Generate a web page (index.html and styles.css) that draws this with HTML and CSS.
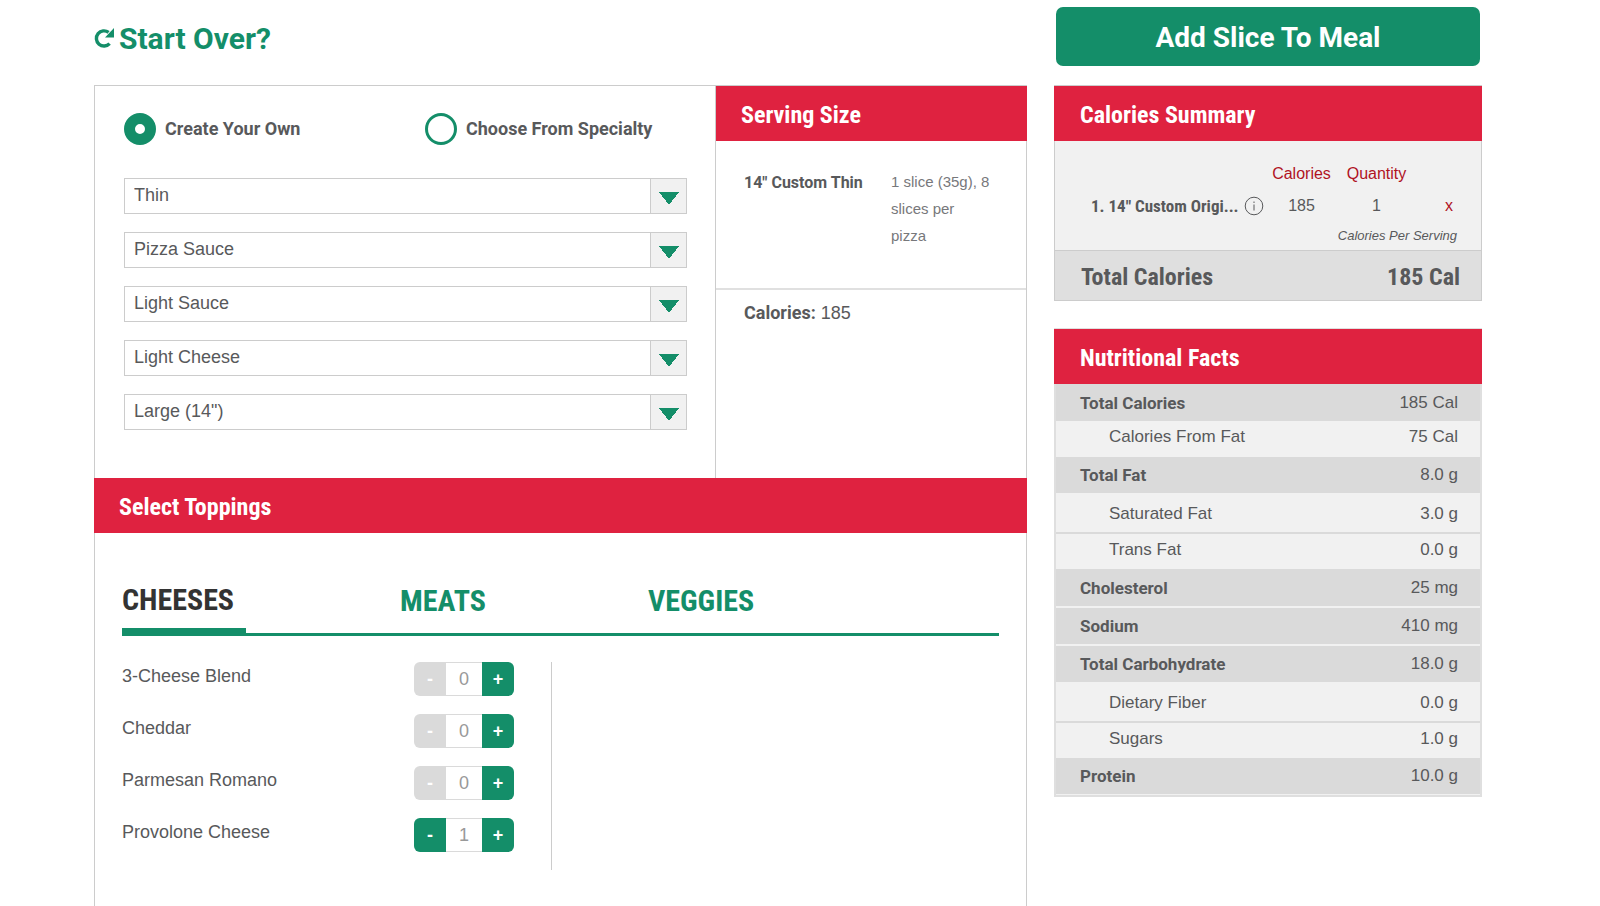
FILE: index.html
```
<!DOCTYPE html>
<html lang="en">
  <head>
    <meta charset="UTF-8" />
    <meta name="viewport" content="width=device-width, initial-scale=1.0" />
    <title>Nutrition Calculator</title>
    <link rel="stylesheet" href="styles.css">
  </head>
  <body>
    <div class="page">
      <main class="main">
        <div class="top">
          <button type="button" class="start-over">
            <svg width="20" height="20" viewBox="0 0 20 20" aria-hidden="true">
              <path d="M15.6 15.6A7.6 7.6 0 1 1 14.6 4.4" fill="none" stroke="#148e69" stroke-width="3.4" />
              <path d="M20 0v9.6h-9z" fill="#148e69" />
            </svg>
            Start Over?
          </button>
        </div>
        <div class="panel">
          <div class="panel-top">
            <form class="builder">
              <div class="modes">
                <label><input type="radio" name="mode" checked />Create Your Own</label>
                <label><input type="radio" name="mode" />Choose From Specialty</label>
              </div>
              <select aria-label="Crust"><option>Thin</option></select>
              <select aria-label="Sauce"><option>Pizza Sauce</option></select>
              <select aria-label="Sauce amount"><option>Light Sauce</option></select>
              <select aria-label="Cheese amount"><option>Light Cheese</option></select>
              <select aria-label="Size"><option>Large (14")</option></select>
            </form>
            <section class="serving">
              <h2 class="bar">Serving Size</h2>
              <div class="serving-item">
                <strong>14″ Custom Thin</strong>
                <p>1 slice (35g), 8 slices per pizza</p>
              </div>
              <p class="serving-cal"><strong>Calories:</strong> 185</p>
            </section>
          </div>
          <h2 class="bar">Select Toppings</h2>
          <section class="toppings">
            <div class="tabs">
              <button type="button" class="tab active">CHEESES</button>
              <button type="button" class="tab">MEATS</button>
              <button type="button" class="tab">VEGGIES</button>
            </div>
            <div class="topping-list">
              <div class="topping">
                <label for="t1">3-Cheese Blend</label>
                <div class="stepper">
                  <button type="button" disabled>-</button><input id="t1" type="text" value="0" /><button type="button">+</button>
                </div>
              </div>
              <div class="topping">
                <label for="t2">Cheddar</label>
                <div class="stepper">
                  <button type="button" disabled>-</button><input id="t2" type="text" value="0" /><button type="button">+</button>
                </div>
              </div>
              <div class="topping">
                <label for="t3">Parmesan Romano</label>
                <div class="stepper">
                  <button type="button" disabled>-</button><input id="t3" type="text" value="0" /><button type="button">+</button>
                </div>
              </div>
              <div class="topping">
                <label for="t4">Provolone Cheese</label>
                <div class="stepper">
                  <button type="button">-</button><input id="t4" type="text" value="1" /><button type="button">+</button>
                </div>
              </div>
            </div>
          </section>
        </div>
      </main>

      <aside class="side">
        <div class="top">
          <button type="button" class="add">Add Slice To Meal</button>
        </div>
        <section class="summary">
          <h2 class="bar">Calories Summary</h2>
          <table class="meal">
            <thead>
              <tr>
                <th class="name"></th>
                <th class="info"></th>
                <th class="num">Calories</th>
                <th class="num">Quantity</th>
                <th></th>
              </tr>
            </thead>
            <tbody>
              <tr>
                <td class="name">1. 14″ Custom Origi...</td>
                <td class="info">
                  <svg width="20" height="20" viewBox="0 0 20 20" fill="none" stroke="#58595b" role="img" aria-label="Info">
                    <circle cx="10" cy="10" r="8.8" />
                    <path d="M10 8.5v6M10 5.5v1.5" />
                  </svg>
                </td>
                <td class="num">185</td>
                <td class="num">1</td>
                <td class="del"><button type="button" aria-label="Remove">x</button></td>
              </tr>
            </tbody>
          </table>
          <p class="per">Calories Per Serving</p>
          <div class="total"><span>Total Calories</span><span>185 Cal</span></div>
        </section>

        <section class="facts">
          <h2 class="bar">Nutritional Facts</h2>
          <table>
            <tr class="head first"><th>Total Calories</th><td>185 Cal</td></tr>
            <tr><th>Calories From Fat</th><td>75 Cal</td></tr>
            <tr class="head"><th>Total Fat</th><td>8.0 g</td></tr>
            <tr class="line"><th>Saturated Fat</th><td>3.0 g</td></tr>
            <tr><th>Trans Fat</th><td>0.0 g</td></tr>
            <tr class="head gap"><th>Cholesterol</th><td>25 mg</td></tr>
            <tr class="head gap"><th>Sodium</th><td>410 mg</td></tr>
            <tr class="head first"><th>Total Carbohydrate</th><td>18.0 g</td></tr>
            <tr class="line"><th>Dietary Fiber</th><td>0.0 g</td></tr>
            <tr><th>Sugars</th><td>1.0 g</td></tr>
            <tr class="head"><th>Protein</th><td>10.0 g</td></tr>
          </table>
        </section>
      </aside>
    </div>
    <script>
      document.querySelectorAll(".stepper").forEach((el) => {
        const [minus, plus] = el.querySelectorAll("button");
        const input = el.querySelector("input");
        const step = (n) => {
          const value = Math.max(0, (parseInt(input.value) || 0) + n);
          input.value = value;
          minus.disabled = value === 0;
        };
        minus.onclick = () => step(-1);
        plus.onclick = () => step(1);
      });

      const tabs = document.querySelectorAll(".tab");
      tabs.forEach((tab) => {
        tab.onclick = () => {
          tabs.forEach((t) => t.classList.toggle("active", t === tab));
        };
      });
    </script>
  </body>
</html>
```
FILE: styles.css
```
* {
  margin: 0;
  padding: 0;
  box-sizing: border-box;
}
body {
  font-family: "Liberation Sans", Arial, sans-serif;
  font-size: 18px;
  color: #58595b;
  background: #fff;
}
button,
input,
select {
  font: inherit;
  color: inherit;
  border: 0;
  background: none;
}
button {
  cursor: pointer;
}
table {
  width: 100%;
  border-collapse: collapse;
}
.bar,
.tab,
.meal td.name,
.total {
  font-family: "Roboto Condensed", Roboto, sans-serif;
  font-weight: bold;
}
strong,
.start-over,
.add,
.modes,
.facts .head th {
  font-family: Roboto, sans-serif;
  font-weight: bold;
}
.page {
  display: grid;
  grid-template-columns: 933fr 428fr;
  column-gap: 27px;
  min-height: 100vh;
  padding: 0 118px 0 94px;
}
.main {
  display: flex;
  flex-direction: column;
}
.top {
  height: 85px;
  padding-top: 7px;
}
.bar {
  height: 55px;
  padding-left: 25px;
  line-height: 58px;
  font-size: 24px;
  color: #fff;
  background: #df2240;
}
.start-over {
  display: flex;
  align-items: center;
  gap: 5px;
  height: 62px;
  font-size: 30px;
  color: #148e69;
}
.add {
  display: block;
  width: calc(100% - 4px);
  height: 59px;
  margin: 0 auto;
  padding-top: 2px;
  border-radius: 7px;
  font-size: 28px;
  color: #fff;
  background: #148e69;
}

/* builder */
.panel {
  flex: 1;
  border: 1px solid #ccc;
  border-bottom: 0;
}
.panel > .bar {
  margin: 0 -1px;
}
.panel-top {
  display: grid;
  grid-template-columns: 620fr 311fr;
  min-height: 392px;
}
.builder {
  display: flex;
  flex-direction: column;
  gap: 18px;
  padding: 27px 28px 0 29px;
}
.modes {
  display: grid;
  grid-template-columns: 301px 1fr;
  height: 47px;
  font-size: 18px;
}
.modes label {
  display: flex;
  gap: 9px;
  height: 32px;
  line-height: 32px;
}
.modes input {
  appearance: none;
  width: 32px;
  height: 32px;
  border: 3px solid #148e69;
  border-radius: 50%;
}
.modes input:checked {
  border-width: 11px;
}
.builder select {
  appearance: none;
  height: 36px;
  padding: 0 46px 3px 9px;
  border: 1px solid #ccc;
  background:
    linear-gradient(to top right, transparent 50%, #148e69 50%) right 17px top 13px / 10px 13px no-repeat,
    linear-gradient(to top left, transparent 50%, #148e69 50%) right 7px top 13px / 10px 13px no-repeat,
    linear-gradient(90deg, #ccc 1px, #f1f1f1 1px) right / 36px 100% no-repeat;
}

/* serving size */
.serving {
  border-left: 1px solid #ccc;
}
.serving .bar {
  margin-right: -1px;
}
.serving-item {
  display: grid;
  grid-template-columns: 147px 100px;
  height: 149px;
  padding: 27px 0 0 28px;
  border-bottom: 2px solid #e0e0e0;
  font-size: 15px;
  line-height: 27px;
}
.serving-item strong {
  font-size: 16px;
  line-height: 30px;
}
.serving-item p {
  color: #77787b;
}
.serving-cal {
  padding: 9px 28px;
  line-height: 27px;
}

/* toppings */
.toppings {
  padding: 35px 27px 0;
}
.tabs {
  display: flex;
  height: 68px;
  border-bottom: 3px solid #148e69;
}
.tab {
  width: 248px;
  height: 68px;
  padding-bottom: 4px;
  text-align: left;
  font-size: 30px;
  color: #148e69;
}
.tab.active {
  width: 124px;
  margin-right: 154px;
  padding-bottom: 0;
  padding-top: 2px;
  color: #333;
  border-bottom: 8px solid #148e69;
}
.topping-list {
  width: 430px;
  height: 208px;
  margin-top: 26px;
  padding-right: 37px;
  border-right: 1px solid #ccc;
}
.topping {
  display: flex;
  justify-content: space-between;
  height: 52px;
}
.topping label {
  line-height: 28px;
}
.stepper {
  display: flex;
  width: 100px;
  height: 34px;
  border-radius: 6px;
  overflow: hidden;
}
.stepper button {
  width: 32px;
  font-weight: bold;
  color: #fff;
  background: #148e69;
}
.stepper button:disabled {
  background: #dadada;
}
.stepper input {
  width: 36px;
  text-align: center;
  color: #999;
  border: 1px solid #dadada;
  border-width: 1px 0;
}

/* calories summary */
.summary,
.facts {
  border: 1px solid #ccc;
}
.side .bar {
  margin: 0 -1px;
  padding-left: 26px;
}
.summary {
  margin-bottom: 27px;
  background: #f1f1f1;
}
.meal {
  margin-top: 17px;
  table-layout: fixed;
  font-size: 16px;
}
.meal th {
  height: 32px;
  font-weight: normal;
  color: #b0131f;
}
.meal td {
  height: 32px;
}
.meal .name {
  width: 180px;
  padding-left: 36px;
  white-space: nowrap;
  font-size: 17px;
}
.meal .info {
  width: 29px;
  padding-left: 9px;
}
.meal svg {
  display: block;
}
.meal .num {
  width: 75px;
  text-align: center;
}
.meal .del {
  padding-right: 28px;
  text-align: right;
}
.meal .del button {
  color: #b0131f;
}
.per {
  height: 28px;
  padding-right: 24px;
  line-height: 28px;
  text-align: right;
  font-size: 13px;
  font-style: italic;
}
.total {
  display: flex;
  justify-content: space-between;
  height: 50px;
  padding: 0 21px 0 26px;
  line-height: 52px;
  font-size: 24px;
  border-top: 1px solid #ccc;
  background: #dfdfdf;
}

/* nutritional facts */
.facts {
  border-width: 1px 2px 2px;
  border-color: #dfdfdf;
  background: #f1f1f1;
}
.facts .bar {
  margin: 0 -2px;
}
.facts table {
  margin-bottom: 1px;
  font-size: 17px;
}
.facts tr {
  height: 36px;
}
.facts th {
  padding: 0 0 4px 53px;
  text-align: left;
  font-weight: normal;
}
.facts td {
  padding: 0 22px 4px 0;
  text-align: right;
}
.facts .head {
  background: #dadada;
}
.facts .head th {
  padding: 0 0 0 24px;
}
.facts .head td {
  padding-bottom: 0;
}
.facts .line th,
.facts .line td {
  padding-top: 2px;
  padding-bottom: 0;
}
.facts .first {
  height: 37px;
}
.facts .line {
  height: 40px;
  border-bottom: 2px solid #dadada;
}
.facts .gap {
  height: 38px;
  border-bottom: 2px solid #f1f1f1;
}
```
